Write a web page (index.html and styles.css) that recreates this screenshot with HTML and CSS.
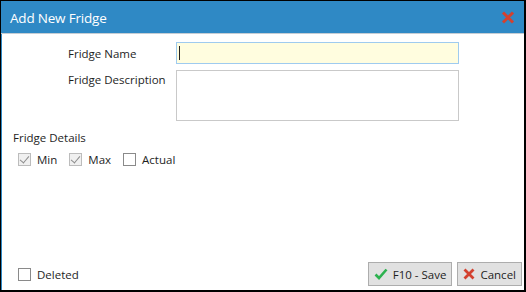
FILE: index.html
```html
<!DOCTYPE html>
<html lang="en">
<head>
    <meta charset="UTF-8">
    <title>Add New Fridge</title>
    <link rel="stylesheet" href="styles.css">
</head>
<body>
    <div class="window">
        <div class="titlebar">
            <span class="title">Add New Fridge</span>
            <svg class="close" width="14" height="13" viewBox="0 0 14 13">
                <path d="M2 1.5 L12 11.5 M12 1.5 L2 11.5" stroke="#d3412f" stroke-width="3" stroke-linecap="butt"/>
            </svg>
        </div>

        <div class="content">
            <div class="form">
                <label class="label label-mid">Fridge Name</label>
                <div class="field field-name"><span class="caret"></span></div>
                <label class="label label-top">Fridge Description</label>
                <div class="field field-desc"></div>
            </div>

            <div class="section">Fridge Details</div>
            <div class="checks">
                <span class="check disabled checked"></span><span class="check-text">Min</span>
                <span class="check disabled checked"></span><span class="check-text">Max</span>
                <span class="check"></span><span class="check-text">Actual</span>
            </div>

            <div class="footer">
                <div class="checks">
                    <span class="check"></span><span class="check-text">Deleted</span>
                </div>
                <div class="buttons">
                    <button class="btn">
                        <svg width="14" height="12" viewBox="0 0 14 12"><path d="M1.5 6.5 L5 10 L12.5 1.5" fill="none" stroke="#2db24f" stroke-width="2.6"/></svg>
                        F10 - Save
                    </button>
                    <button class="btn">
                        <svg width="12" height="12" viewBox="0 0 12 12"><path d="M1.5 1.5 L10.5 10.5 M10.5 1.5 L1.5 10.5" stroke="#d3412f" stroke-width="2.8"/></svg>
                        Cancel
                    </button>
                </div>
            </div>
        </div>
    </div>
</body>
</html>
```

FILE: styles.css
```css
body {
    margin: 0;
    font-family: "Open Sans", "Noto Sans", sans-serif;
    font-size: 11.5px;
    color: #1e1e1e;
}
.window {
    width: 526px;
    height: 292px;
    box-sizing: border-box;
    border: 1px solid #000;
    border-right-width: 2px;
    border-bottom-width: 2px;
    display: flex;
    flex-direction: column;
    background: white;
}
.titlebar {
    height: 32px;
    background: #2f89c5;
    border-bottom: 1px solid #c5cdd4;
    display: flex;
    align-items: center;
    justify-content: space-between;
    padding: 0 9px 0 9px;
    color: white;
}
.title {
    font-size: 13.5px;
    letter-spacing: -0.2px;
    padding-top: 1px;
}
.content {
    flex: 1;
    border-left: 1px solid #2f89c5;
    display: flex;
    flex-direction: column;
    padding: 8px 0 0 0;
}
.form {
    display: grid;
    grid-template-columns: 108px 283px;
    row-gap: 6px;
    padding-left: 66px;
}
.label-mid {
    align-self: center;
}
.label-top {
    padding-top: 2px;
}
.field {
    box-sizing: border-box;
    border: 1px solid #c9c9c9;
    background: white;
}
.field-name {
    height: 22px;
    background: #fffddf;
    border-color: #9fcbef;
    padding: 3px 0 0 2px;
}
.caret {
    display: block;
    width: 1px;
    height: 14px;
    background: #222;
}
.field-desc {
    height: 51px;
}
.section {
    margin: 9px 0 0 11px;
}
.checks {
    display: flex;
    align-items: center;
    padding-left: 16px;
    margin-top: 7px;
}
.check {
    width: 13px;
    height: 13px;
    box-sizing: border-box;
    border: 1px solid #8a8a8a;
    background: white;
    position: relative;
}
.check.disabled {
    border-color: #bcbcbc;
    background: #f0f0f0;
}
.check.checked::after {
    content: "";
    position: absolute;
    left: 3px;
    top: 0px;
    width: 4px;
    height: 8px;
    border: solid #8c8c8c;
    border-width: 0 1.5px 1.5px 0;
    transform: rotate(40deg);
}
.check-text {
    margin: 0 12px 0 6px;
}
.footer {
    margin-top: auto;
    display: flex;
    justify-content: space-between;
    align-items: center;
    padding: 0 2px 4px 0;
}
.footer .checks {
    margin-top: 0;
}
.buttons {
    display: flex;
    gap: 5px;
}
.btn {
    height: 24px;
    box-sizing: border-box;
    border: 1px solid #adadad;
    background: #e1e1e1;
    font-family: inherit;
    font-size: 11.5px;
    color: #1e1e1e;
    display: flex;
    align-items: center;
    gap: 5px;
    padding: 0 5px 0 5px;
}
```
